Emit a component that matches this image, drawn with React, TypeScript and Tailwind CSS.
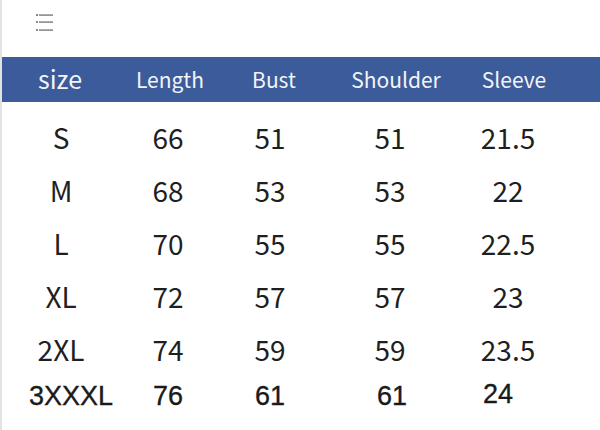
import React from 'react'

const rows = [
  ['S', '66', '51', '51', '21.5'],
  ['M', '68', '53', '53', '22'],
  ['L', '70', '55', '55', '22.5'],
  ['XL', '72', '57', '57', '23'],
  ['2XL', '74', '59', '59', '23.5'],
]

function ListIcon() {
  return (
    <svg width="20" height="20" viewBox="0 0 20 20" className="text-[#8a8a8a]">
      <g fill="currentColor">
        <rect x="0" y="2" width="2" height="2" />
        <rect x="0" y="9" width="2" height="2" />
        <rect x="0" y="17" width="2" height="2" />
        <rect x="3" y="2.3" width="14" height="1.6" />
        <rect x="3" y="9.3" width="14" height="1.6" />
        <rect x="3" y="17.3" width="14" height="1.6" />
      </g>
    </svg>
  )
}

export default function App() {
  return (
    <div className="w-[600px] h-[430px] bg-white overflow-hidden border-l-2 border-[#e2e2e2] flex flex-col">
      {/* top icon */}
      <div className="h-[57px] pl-[34px] pt-[12px]">
        <ListIcon />
      </div>

      {/* header */}
      <div className="h-[45px] bg-[#3b5b9a] grid grid-cols-[116px_104px_104px_140px_96px] items-center text-[#f2f4f8] font-['Noto_Sans_CJK_SC','Noto_Sans',sans-serif] leading-none">
        <div className="text-center text-[25px] -mt-[3px]">size</div>
        <div className="text-center text-[21px]">Length</div>
        <div className="text-center text-[21px]">Bust</div>
        <div className="text-center text-[21px]">Shoulder</div>
        <div className="text-center text-[21px]">Sleeve</div>
      </div>

      {/* body */}
      <div className="pt-[8px] font-['Noto_Sans_CJK_SC','Noto_Sans',sans-serif] text-[28px] text-[#1f1f1f]">
        {rows.map((r) => (
          <div key={r[0]} className="h-[53px] grid grid-cols-[118px_96px_108px_132px_104px] items-center leading-none">
            {r.map((c, i) => (
              <div key={i} className="text-center">{c}</div>
            ))}
          </div>
        ))}
        <div className="h-[42px] grid grid-cols-[138px_56px_148px_96px_116px] items-center leading-none font-['Liberation_Sans',Arial,sans-serif] text-[27px] text-[#1a1a1a] [-webkit-text-stroke:0.35px_#1a1a1a]">
          <div className="text-center">3XXXL</div>
          <div className="text-center">76</div>
          <div className="text-center">61</div>
          <div className="text-center">61</div>
          <div className="text-center -mt-[4px]">24</div>
        </div>
      </div>
    </div>
  )
}
